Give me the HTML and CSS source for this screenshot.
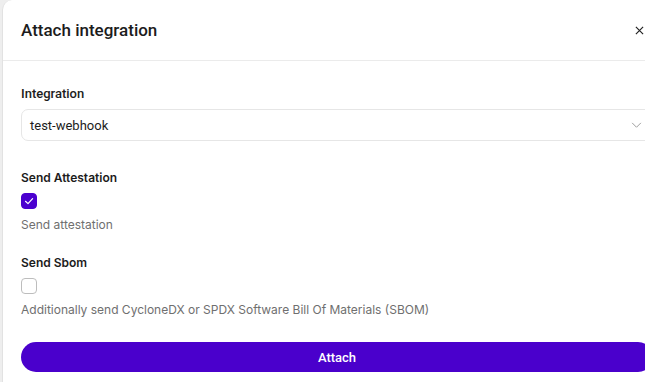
FILE: index.html
```html
<!DOCTYPE html>
<html lang="en">
<head>
  <meta charset="UTF-8" />
  <title>Attach integration</title>
  <link rel="stylesheet" href="styles.css">
</head>
<body>
  <div class="modal">
    <!-- Header -->
    <header class="modal-header">
      <h2 class="modal-title">Attach integration</h2>
      <button class="close-btn" aria-label="Close">
        <svg viewBox="0 0 10 10" width="9" height="9">
          <path d="M1,1 L9,9 M9,1 L1,9" stroke="#222" stroke-width="1.3" fill="none"/>
        </svg>
      </button>
    </header>

    <!-- Form -->
    <form class="modal-body">
      <label class="field-label">Integration</label>
      <div class="select">
        <span>test-webhook</span>
        <svg class="chevron" viewBox="0 0 12 8" width="11" height="7">
          <path d="M1,1 L6,6 L11,1" stroke="#9a9a9a" stroke-width="1.1" fill="none"/>
        </svg>
      </div>

      <div class="check-label first">Send Attestation</div>
      <span class="checkbox checked">
        <svg viewBox="0 0 16 16" width="16" height="16">
          <path d="M4.5,8.3 L7,10.6 L11.6,5.6" stroke="#fff" stroke-width="1.2" fill="none" stroke-linecap="round" stroke-linejoin="round"/>
        </svg>
      </span>
      <p class="hint">Send attestation</p>

      <div class="check-label">Send Sbom</div>
      <span class="checkbox"></span>
      <p class="hint">Additionally send CycloneDX or SPDX Software Bill Of Materials (SBOM)</p>

      <button type="button" class="submit-btn">Attach</button>
    </form>
  </div>
</body>
</html>
```

FILE: styles.css
```css
* {
  margin: 0;
  padding: 0;
  box-sizing: border-box;
}
body {
  background: #eeeeee;
  overflow: hidden;
  font-family: Roboto, "Liberation Sans", sans-serif;
  color: #1c1c1c;
}

/* Dialog panel, runs off the right edge of the view */
.modal {
  margin-left: 2px;
  width: 662px;
  height: 400px;
  background: #fff;
  border-left: 1px solid #e2e2e2;
  border-radius: 10px 10px 0 0;
}

.modal-header {
  height: 61px;
  display: flex;
  align-items: center;
  justify-content: space-between;
  padding: 0 20px 0 18px;
  border-bottom: 1px solid #ebebeb;
}
.modal-title {
  font-size: 17px;
  font-weight: 500;
  line-height: 20px;
}
.close-btn {
  border: none;
  background: none;
  display: flex;
  padding: 0;
}

.modal-body {
  display: flex;
  flex-direction: column;
  align-items: flex-start;
  padding: 25px 0 0 18px;
}
.field-label {
  font-size: 13px;
  font-weight: 500;
  line-height: 16px;
}
.select {
  margin-top: 7px;
  width: 640px;
  height: 32px;
  border: 1px solid #e6e6e6;
  border-radius: 7px;
  display: flex;
  align-items: center;
  justify-content: space-between;
  padding: 0 18px 0 8px;
  font-size: 13px;
}

/* Checkbox rows */
.check-label {
  font-family: Inter, "Noto Sans", sans-serif;
  font-size: 12px;
  font-weight: 600;
  line-height: 16px;
  margin-top: 22px;
}
.check-label.first {
  margin-top: 29px;
}
.checkbox {
  margin-top: 7px;
  width: 16px;
  height: 16px;
  border: 1px solid #bdbdbd;
  border-radius: 4px;
  display: block;
}
.checkbox.checked {
  background: #4b00cf;
  border-color: #4b00cf;
}
.checkbox svg {
  display: block;
  margin: -1px;
}
.hint {
  font-family: Inter, "Noto Sans", sans-serif;
  font-size: 12px;
  line-height: 16px;
  color: #6f6f6f;
  margin-top: 8px;
}

.submit-btn {
  margin-top: 24px;
  width: 632px;
  height: 30px;
  border: none;
  border-radius: 15px;
  background: #4a00cc;
  color: #fff;
  font-family: Roboto, "Liberation Sans", sans-serif;
  font-size: 13px;
  font-weight: 500;
}
```
